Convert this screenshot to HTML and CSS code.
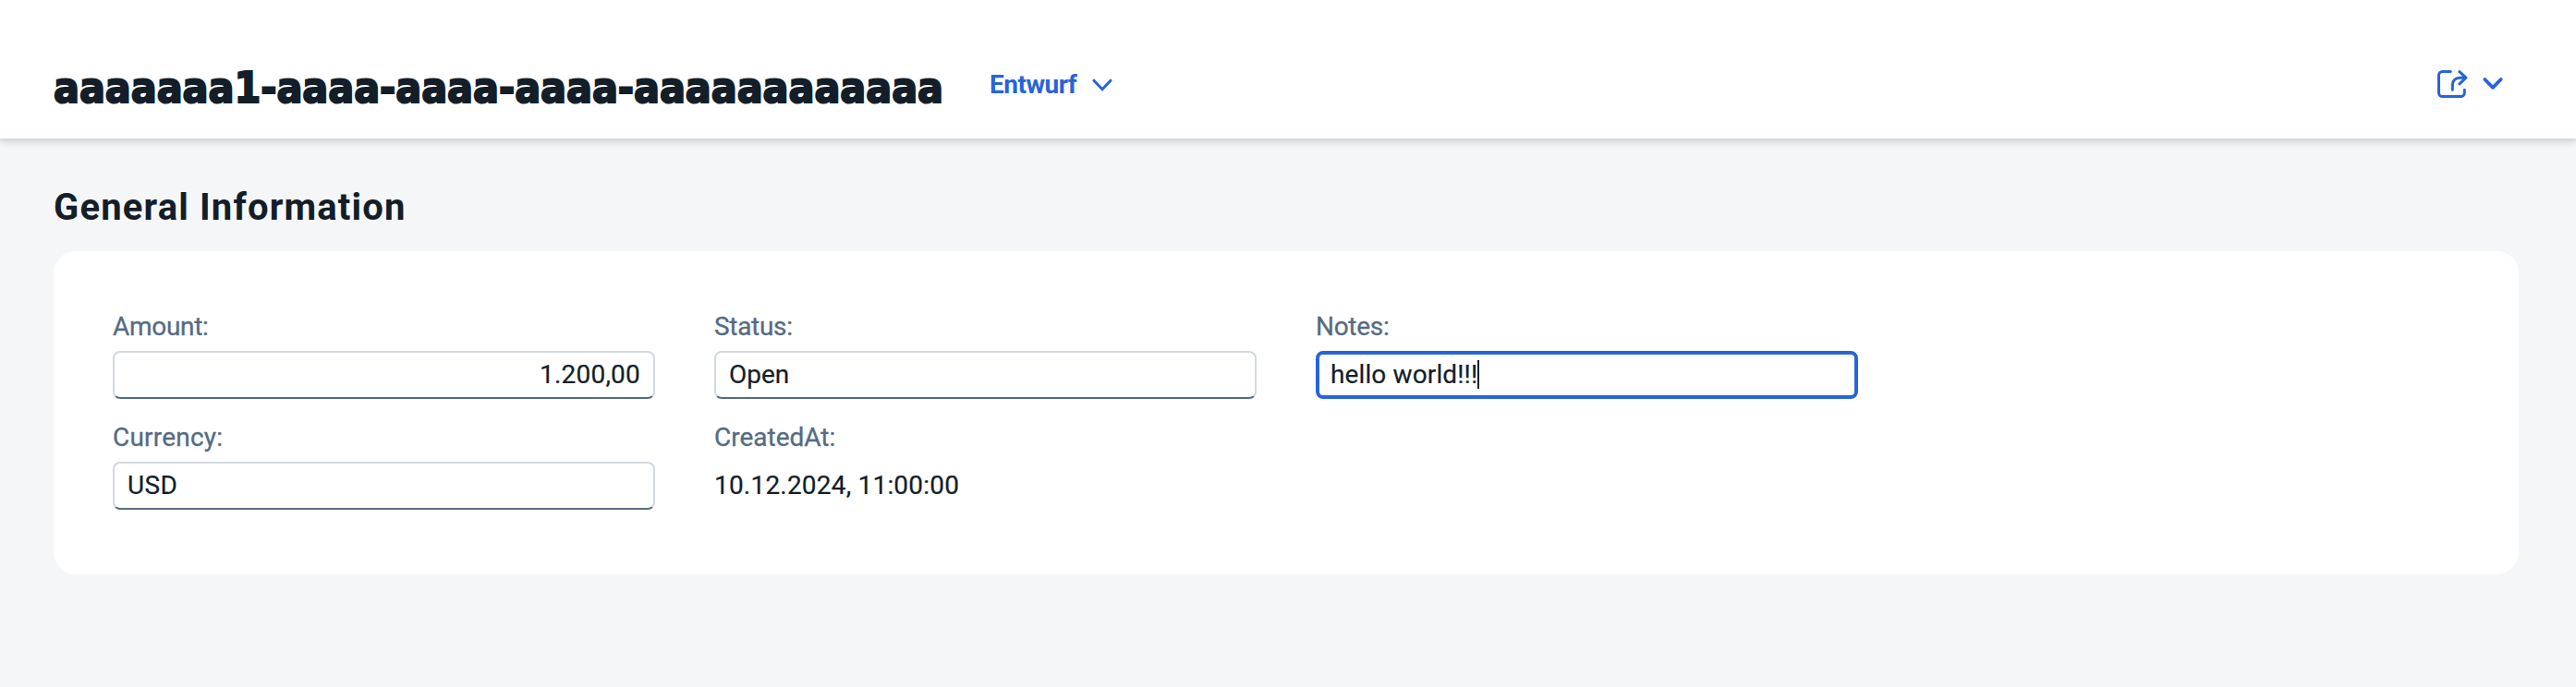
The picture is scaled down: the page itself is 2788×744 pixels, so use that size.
FILE: index.html
```html
<!DOCTYPE html>
<html lang="de">
<head>
<meta charset="utf-8">
<title>General Information</title>
<link rel="stylesheet" href="styles.css">
</head>
<body>
<header class="header">
  <h1 class="title">aaaaaaa1-aaaa-aaaa-aaaa-aaaaaaaaaaaa</h1>
  <button class="version"><span class="version-text">Entwurf</span>
    <svg class="version-arrow" width="24" height="16" viewBox="0 0 24 16"><path d="M3 3.200 12 12.800 21 3.200"/></svg>
  </button>
  <button class="share">
    <svg class="share-icon" width="34" height="32" viewBox="0 0 34 32"><path d="M15.200 2.500H6.500a4 4 0 0 0-4 4v19a4 4 0 0 0 4 4h19.800a4 4 0 0 0 4-4V22.200M17.300 22.200v-5.500a7.500 7.500 0 0 1 7.500-7.500h7M24.900 2.600l7 6.600-7 6.600"/></svg>
    <svg class="share-arrow" width="24" height="18" viewBox="0 0 24 18"><path d="M3.300 4 12 12.800 20.700 4"/></svg>
  </button>
</header>
<main class="content">
  <h2 class="section-title">General Information</h2>
  <section class="card">
    <div class="field">
      <span class="label l-amount">Amount:</span>
      <div class="input number"><span class="v-amount">1.200,00</span></div>
    </div>
    <div class="field">
      <span class="label l-status">Status:</span>
      <div class="input"><span>Open</span></div>
    </div>
    <div class="field">
      <span class="label l-notes">Notes:</span>
      <div class="input focused"><span class="v-notes">hello world!!!</span><i class="caret"></i></div>
    </div>
    <div class="field first">
      <span class="label l-currency">Currency:</span>
      <div class="input"><span class="v-usd">USD</span></div>
    </div>
    <div class="field">
      <span class="label">CreatedAt:</span>
      <div class="text"><span class="v-date">10.12.2024, 11:00:00</span></div>
    </div>
  </section>
</main>
</body>
</html>
```
FILE: styles.css
```css
* { box-sizing: border-box; }
body {
  margin: 0;
  height: 744px;
  overflow: hidden;
  background: #f5f6f7;
  color: #131e29;
  font-family: Roboto, "Liberation Sans", sans-serif;
  font-size: 28px;
}
button { border: 0; padding: 0; background: none; font: inherit; color: #2764d9; display: flex; align-items: center; }
svg { display: block; fill: none; stroke: #2764d9; stroke-linecap: round; stroke-linejoin: round; }
.header {
  position: relative;
  display: flex;
  align-items: flex-start;
  height: 150px;
  padding: 0 78px 0 58px;
  background: #fff;
  box-shadow: 0 0 4px rgba(34, 53, 72, .12), 0 4px 8px rgba(34, 53, 72, .16);
}
.title {
  margin: 67px 0 0;
  width: 1013px;
  font: bold 46px/56px "DejaVu Sans Condensed", "DejaVu Sans", sans-serif;
  font-stretch: condensed;
  -webkit-text-stroke: 2px #131e29;
  white-space: nowrap;
}
.version { margin-top: 76px; height: 32px; }
.version-text { width: 110px; font-weight: 700; line-height: 32px; text-align: left; letter-spacing: -.5px; }
.version-arrow { stroke-width: 3; }
.share { margin: 75px 0 0 auto; height: 32px; gap: 15px; }
.share-icon { stroke-width: 3; }
.share-arrow { stroke-width: 3.8; }
.content { padding: 51px 62px 0 58px; }
.section-title { margin: 0; height: 71px; font-size: 40px; line-height: 48px; font-weight: 700; letter-spacing: 1.15px; }
.card {
  display: grid;
  grid-template-columns: repeat(4, 651px);
  grid-auto-rows: 120px;
  height: 350px;
  padding: 60px 32px 0;
  background: #fff;
  border-radius: 24px;
}
.field { padding: 0 32px; }
.first { grid-column: 1; }
.label { display: block; height: 48px; padding-top: 6px; line-height: 32px; color: #556b82; white-space: nowrap; -webkit-text-stroke: .3px #556b82; }
.l-amount, .l-status, .l-notes { letter-spacing: -.3px; }
.l-currency { letter-spacing: .2px; }
.input {
  display: flex;
  height: 52px;
  padding: 0 14px;
  border: 2px solid #d3d9df;
  border-bottom-color: #556b82;
  border-radius: 8px;
  line-height: 47px;
  white-space: nowrap;
}
.input span, .text span { -webkit-text-stroke: .2px #131e29; }
.number { justify-content: flex-end; }
.v-amount { letter-spacing: .2px; }
.v-usd { letter-spacing: .4px; }
.v-notes { letter-spacing: .12px; }
.v-date { letter-spacing: .2px; }
.focused { border: 4px solid #2764d9; padding-left: 12px; line-height: 43px; }
.caret { width: 2px; height: 31px; margin-top: 6px; background: #131e29; }
.text { line-height: 51px; white-space: nowrap; }
```
